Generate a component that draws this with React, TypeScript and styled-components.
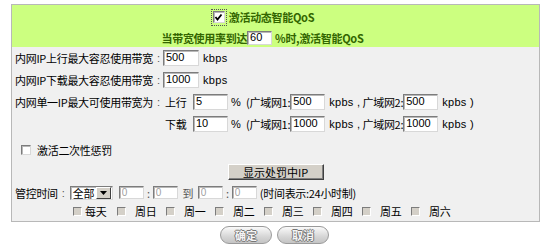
import React from 'react'
import styled, { createGlobalStyle } from 'styled-components'

const days = ['每天', '周日', '周一', '周二', '周三', '周四', '周五', '周六']

function Check({ checked }: { checked?: boolean }) {
  return (
    <s.CheckBox>
      {checked && (
        <svg width="9" height="9" viewBox="0 0 9 9">
          <polyline points="1.5,4 3.5,6.5 7.5,1.5" fill="none" stroke="#000" strokeWidth="1.8" />
        </svg>
      )}
    </s.CheckBox>
  )
}

function App() {
  return (
    <>
      <GlobalStyle />
      <s.Panel>
        <s.Header>
          <s.HeaderLine>
            <s.Focus>
              <Check checked />
            </s.Focus>
            激活动态智能QoS
          </s.HeaderLine>
          <s.HeaderLine $h={18}>
            当带宽使用率到达
            <s.Field $w={25} $h={14} value="60" readOnly />
            <s.Gap $w={3} />
            %时,激活智能QoS
          </s.HeaderLine>
        </s.Header>

        <s.Row>
          <s.Label>内网IP上行最大容忍使用带宽</s.Label>
          <s.Colon>:</s.Colon>
          <s.Field $w={36} value="500" readOnly />
          <s.Latin $ml={4}>kbps</s.Latin>
        </s.Row>
        <s.Row>
          <s.Label>内网IP下载最大容忍使用带宽</s.Label>
          <s.Colon>:</s.Colon>
          <s.Field $w={36} value="1000" readOnly />
          <s.Latin $ml={4}>kbps</s.Latin>
        </s.Row>
        <s.Row>
          <s.Label>内网单一IP最大可使用带宽为</s.Label>
          <s.Colon>:</s.Colon>
          <LimitCells dir="上行" own="5" wan1="500" wan2="500" />
        </s.Row>
        <s.Row>
          <s.Label />
          <s.Colon />
          <LimitCells dir="下载" own="10" wan1="1000" wan2="1000" />
        </s.Row>

        <s.CheckRow>
          <s.SmallBox />
          激活二次性惩罚
        </s.CheckRow>

        <s.Center $h={22}>
          <s.GrayButton>显示处罚中IP</s.GrayButton>
        </s.Center>

        <s.TimeRow>
          <span>管控时间</span>
          <s.Colon $ml={4}>:</s.Colon>
          <s.Select>
            <span>全部</span>
            <s.Arrow>
              <svg width="7" height="4" viewBox="0 0 7 4">
                <polygon points="0,0 7,0 3.5,4" fill="#000" />
              </svg>
            </s.Arrow>
          </s.Select>
          <s.Gap $w={6} />
          <s.TimeField value="0" readOnly disabled />
          <s.Sep>:</s.Sep>
          <s.TimeField value="0" readOnly disabled />
          <s.Sep $w={20}>到</s.Sep>
          <s.TimeField value="0" readOnly disabled />
          <s.Sep>:</s.Sep>
          <s.TimeField value="0" readOnly disabled />
          <s.Gap $w={3} />
          <span>(时间表示:24小时制)</span>
        </s.TimeRow>

        <s.DayRow>
          {days.map((d, i) => (
            <s.Day key={d} $first={i === 0}>
              <s.DayBox />
              <span>{d}</span>
            </s.Day>
          ))}
        </s.DayRow>
      </s.Panel>

      <s.Actions>
        <s.PillButton>确定</s.PillButton>
        <s.PillButton>取消</s.PillButton>
      </s.Actions>
    </>
  )
}

function LimitCells({ dir, own, wan1, wan2 }: { dir: string; own: string; wan1: string; wan2: string }) {
  return (
    <>
      <s.Dir>{dir}</s.Dir>
      <s.Field $w={35} value={own} readOnly />
      <s.Latin $ml={3}>%</s.Latin>
      <s.Gap $w={5} />
      <span>(广域网1:</span>
      <s.Field $w={35} value={wan1} readOnly />
      <s.Latin $ml={4}>kpbs ,</s.Latin>
      <span>&nbsp;广域网2:</span>
      <s.Field $w={35} value={wan2} readOnly />
      <s.Latin $ml={4}>kpbs )</s.Latin>
    </>
  )
}

const GlobalStyle = createGlobalStyle`
  body {
    margin: 0;
    background: #fff;
    font-family: "Noto Sans CJK SC", "Liberation Sans", sans-serif;
    font-size: 11px;
    letter-spacing: -0.3px;
    color: #000;
  }
`

const inset = `
  border: 1px solid;
  border-color: #7c7c7c #d8d8d8 #d8d8d8 #7c7c7c;
  box-shadow: inset 1px 1px 0 #b8b8b8;
  background: #fff;
`

const s = {
  Panel: styled.div`
    width: 529px;
    margin: 4px 0 0 11px;
    box-sizing: border-box;
    border: 1px solid #b8b8b8;
    background: #f0f0f0;
    padding-bottom: 1px;
  `,

  Header: styled.div`
    height: 42px;
    background: #ccff80;
    color: #336600;
    font-weight: bold;
    display: flex;
    flex-direction: column;
  `,

  HeaderLine: styled.div<{ $h?: number }>`
    height: ${(p) => p.$h || 24}px;
    display: flex;
    align-items: center;
    justify-content: center;
    padding-right: 26px;
    white-space: nowrap;
  `,

  Focus: styled.span`
    display: flex;
    align-items: center;
    justify-content: center;
    width: 16px;
    height: 17px;
    margin-right: 2px;
    outline: 1px dotted #555;
    outline-offset: -1px;
  `,

  CheckBox: styled.span`
    display: flex;
    align-items: center;
    justify-content: center;
    width: 12px;
    height: 12px;
    box-sizing: border-box;
    ${inset}
  `,

  Row: styled.div`
    display: flex;
    align-items: center;
    height: 22px;
    padding-left: 3px;
    white-space: nowrap;
  `,

  Label: styled.span`
    width: 142px;
    flex: none;
  `,

  Colon: styled.span<{ $ml?: number }>`
    width: 6px;
    flex: none;
    margin-left: ${(p) => p.$ml || 0}px;
    font-family: "Liberation Sans", sans-serif;
    color: #555;
  `,

  Dir: styled.span`
    margin-left: 2px;
    width: 28px;
  `,

  Field: styled.input<{ $w: number; $h?: number }>`
    width: ${(p) => p.$w}px;
    height: ${(p) => p.$h || 16}px;
    box-sizing: border-box;
    padding: 0 0 3px 2px;
    margin: 0;
    font: 11px "Liberation Sans", sans-serif;
    color: #000;
    outline: none;
    ${inset}
  `,

  Latin: styled.span<{ $ml?: number }>`
    margin-left: ${(p) => p.$ml || 0}px;
    font-family: "Liberation Sans", sans-serif;
    font-size: 11px;
    letter-spacing: 0.3px;
  `,

  Gap: styled.span<{ $w: number }>`
    display: inline-block;
    width: ${(p) => p.$w}px;
  `,

  CheckRow: styled.div`
    display: flex;
    align-items: center;
    gap: 6px;
    height: 22px;
    margin-top: 4px;
    padding-left: 9px;
  `,

  SmallBox: styled.span`
    width: 10px;
    height: 10px;
    box-sizing: border-box;
    ${inset}
  `,

  Center: styled.div<{ $h: number }>`
    height: ${(p) => p.$h}px;
    display: flex;
    align-items: center;
    justify-content: center;
  `,

  GrayButton: styled.button`
    width: 96px;
    height: 16px;
    padding: 0;
    box-sizing: border-box;
    background: #d4d0c8;
    border: 1px solid;
    border-color: #fff #404040 #404040 #fff;
    box-shadow: inset -1px -1px 0 #808080;
    font: 11px "Noto Sans CJK SC", "Liberation Serif", serif;
    color: #000;
    line-height: 13px;
  `,

  TimeRow: styled.div`
    display: flex;
    align-items: center;
    height: 19px;
    padding-left: 3px;
    white-space: nowrap;
  `,

  Select: styled.span`
    display: flex;
    align-items: center;
    justify-content: space-between;
    width: 43px;
    height: 14px;
    margin-left: 2px;
    box-sizing: border-box;
    padding-left: 2px;
    ${inset}
  `,

  Arrow: styled.span`
    display: flex;
    align-items: center;
    justify-content: center;
    width: 13px;
    height: 10px;
    margin-right: 1px;
    background: #d4d0c8;
    border: 1px solid;
    border-color: #fff #404040 #404040 #fff;
  `,

  TimeField: styled.input`
    width: 25px;
    height: 13px;
    box-sizing: border-box;
    padding: 0 0 1px 2px;
    margin: 0;
    font: 10px "Liberation Sans", sans-serif;
    color: #a0a0a0;
    ${inset}
  `,

  Sep: styled.span<{ $w?: number }>`
    width: ${(p) => p.$w || 9}px;
    text-align: center;
    color: #555;
  `,

  DayRow: styled.div`
    display: flex;
    align-items: center;
    height: 18px;
    padding-left: 61px;
  `,

  Day: styled.span<{ $first?: boolean }>`
    display: flex;
    align-items: center;
    width: ${(p) => (p.$first ? 44 : 49)}px;
    gap: ${(p) => (p.$first ? 3 : 9)}px;
  `,

  DayBox: styled.span`
    width: 9px;
    height: 9px;
    box-sizing: border-box;
    border: 1px solid;
    border-color: #7c7c7c #fff #fff #7c7c7c;
    background: #d4d0c8;
  `,

  Actions: styled.div`
    display: flex;
    justify-content: center;
    gap: 5px;
    margin: 4px 0 0 0;
    width: 549px;
  `,

  PillButton: styled.button`
    width: 52px;
    height: 18px;
    padding: 0;
    border-radius: 9px;
    border: 1px solid #9a9a9a;
    background: linear-gradient(#fafafa, #d6d6d6 60%, #c4c4c4);
    font: bold 11px "Noto Sans CJK SC", sans-serif;
    color: #f4f4f4;
    text-shadow: 1px 0 0 #777, -1px 0 0 #777, 0 1px 0 #777, 0 -1px 0 #777;
    line-height: 14px;
  `
}

export default App
